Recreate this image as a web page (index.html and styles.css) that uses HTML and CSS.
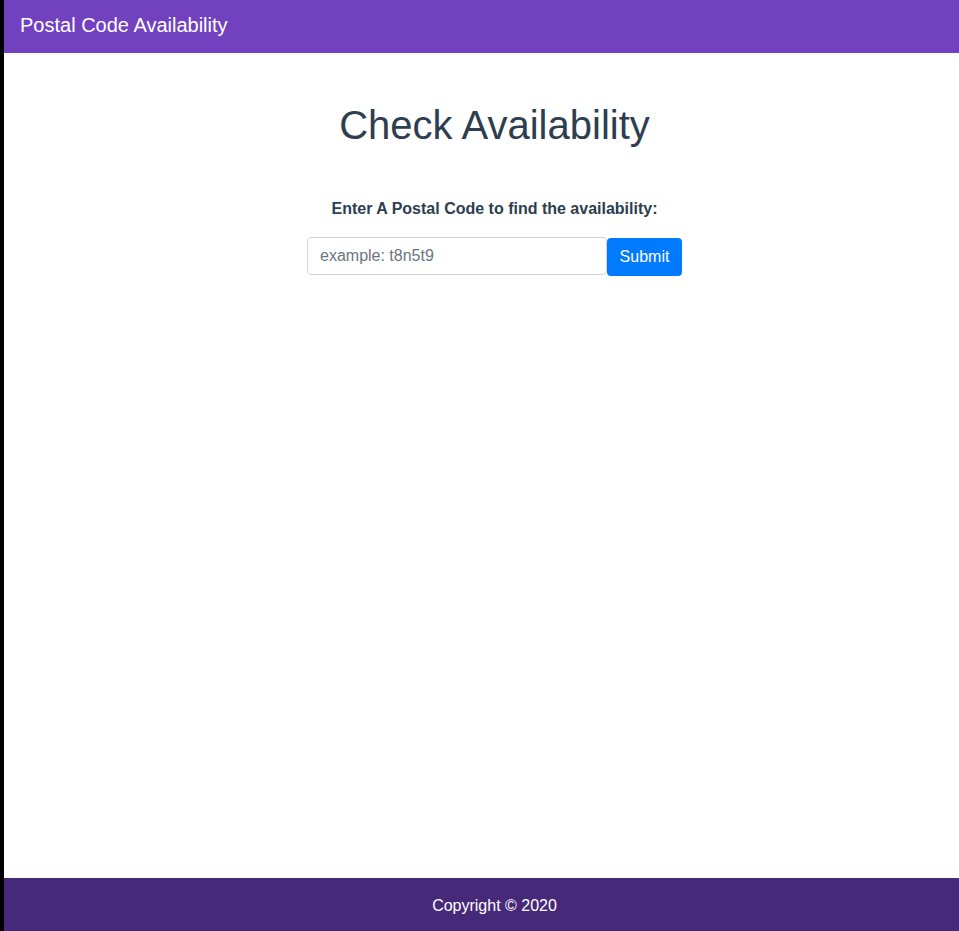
FILE: index.html
```html
<!DOCTYPE html>
<html lang="en">
<head>
<meta charset="utf-8">
<title>Postal Code Availability</title>
<link rel="stylesheet" href="styles.css">
</head>
<body>
<div class="page">
  <header class="navbar">
    <span class="brand">Postal Code Availability</span>
  </header>
  <main class="main">
    <h1 class="title">Check Availability</h1>
    <label class="label" for="postal">Enter A Postal Code to find the availability:</label>
    <form class="form">
      <input id="postal" class="input" type="text" placeholder="example: t8n5t9">
      <button class="btn" type="button">Submit</button>
    </form>
  </main>
  <footer class="footer">Copyright © 2020</footer>
</div>
</body>
</html>
```
FILE: styles.css
```css
html, body {
  margin: 0;
  padding: 0;
  height: 100%;
}
body {
  background: #000;
  font-family: "Liberation Sans", Arial, sans-serif;
  overflow: hidden;
}
.page {
  margin-left: 4px;
  background: #fff;
  height: 931px;
  display: flex;
  flex-direction: column;
}
.navbar {
  height: 53px;
  flex: 0 0 53px;
  background: #7241bf;
  display: flex;
  align-items: center;
  padding-left: 16px;
}
.brand {
  color: #fff;
  font-size: 20px;
  line-height: 24px;
  margin-top: -3px;
}
.main {
  flex: 1;
  display: flex;
  flex-direction: column;
  align-items: center;
  padding-left: 26px;
}
.title {
  margin: 48px 0 0;
  font-size: 40px;
  line-height: 48px;
  font-weight: 400;
  color: #2c3e50;
}
.label {
  margin-top: 48px;
  font-size: 16px;
  line-height: 24px;
  font-weight: 700;
  color: #2c3e50;
}
.form {
  margin: 16px 0 0;
  display: flex;
  align-items: flex-start;
}
.input {
  box-sizing: border-box;
  width: 300px;
  height: 38px;
  padding: 0 12px;
  border: 1px solid #ced4da;
  border-radius: 4px;
  font-family: "Liberation Sans", Arial, sans-serif;
  font-size: 16px;
  color: #495057;
  outline: none;
}
.input::placeholder {
  color: #6c757d;
}
.btn {
  box-sizing: border-box;
  width: 75px;
  height: 38px;
  margin-top: 1px;
  border: none;
  border-radius: 4px;
  background: #007bff;
  color: #fff;
  font-family: "Liberation Sans", Arial, sans-serif;
  font-size: 16px;
  padding: 0;
}
.footer {
  height: 53px;
  flex: 0 0 53px;
  background: #47297a;
  color: #fff;
  font-size: 16px;
  display: flex;
  align-items: center;
  justify-content: center;
  padding-left: 26px;
  padding-top: 2px;
  box-sizing: border-box;
}
```
